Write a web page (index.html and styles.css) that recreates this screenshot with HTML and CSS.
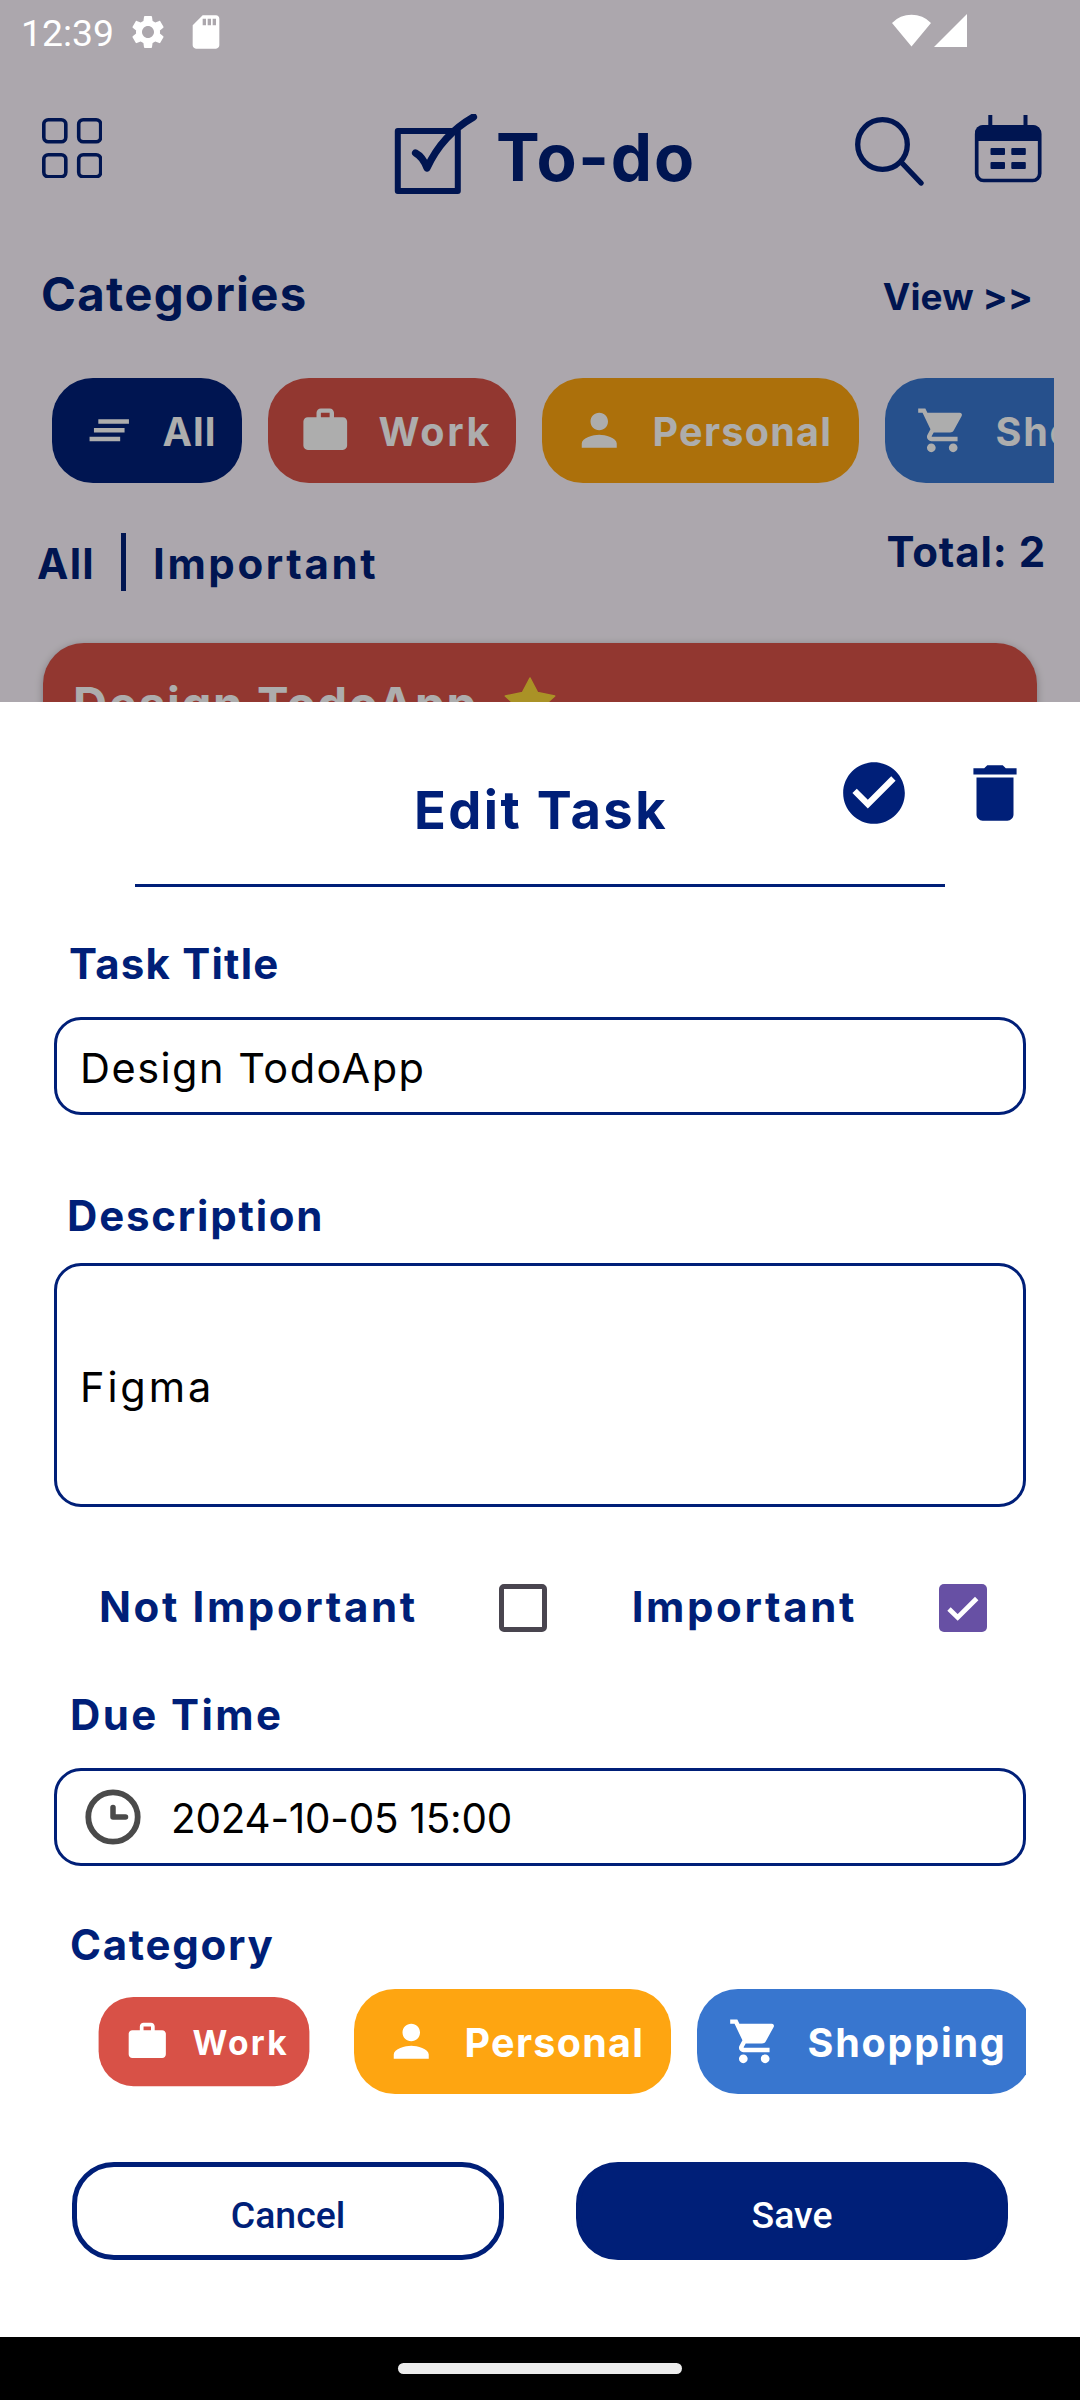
FILE: index.html
```html
<!DOCTYPE html>
<html lang="en">
<head>
<meta charset="utf-8">
<title>To-do</title>
<link rel="stylesheet" href="styles.css">
</head>
<body>
<svg class="sprite" aria-hidden="true">
  <symbol id="i-work" viewBox="0 0 24 24"><path d="M20 6h-4V4c0-1.110-.89-2-2-2h-4c-1.110 0-2 .89-2 2v2H4c-1.110 0-1.990.89-1.990 2L2 19c0 1.110.89 2 2 2h16c1.110 0 2-.89 2-2V8c0-1.110-.89-2-2-2zm-6 0h-4V4h4v2z"/></symbol>
  <symbol id="i-person" viewBox="0 0 24 24"><path d="M12 12c2.210 0 4-1.790 4-4s-1.790-4-4-4-4 1.790-4 4 1.790 4 4 4zm0 2c-2.670 0-8 1.340-8 4v2h16v-2c0-2.660-5.330-4-8-4z"/></symbol>
  <symbol id="i-cart" viewBox="0 0 24 24"><path d="M7 18c-1.100 0-1.990.9-1.990 2S5.900 22 7 22s2-.9 2-2-.9-2-2-2zM1 2v2h2l3.600 7.590-1.350 2.450c-.16.28-.25.61-.25.96 0 1.100.9 2 2 2h12v-2H7.420c-.14 0-.25-.11-.25-.25l.03-.12.9-1.630h7.450c.75 0 1.410-.41 1.750-1.030l3.580-6.490A1 1 0 0 0 20 4H5.210l-.94-2H1zm16 16c-1.100 0-1.990.9-1.990 2s.89 2 1.990 2 2-.9 2-2-.9-2-2-2z"/></symbol>
  <symbol id="i-all" viewBox="0 0 24 24"><path d="M5 13h14v-2H5v2zm-2 4h14v-2H3v2zM7 7v2h14V7H7z"/></symbol>
</svg>

<main class="screen">
  <section class="home">
    <header class="appbar">
      <svg class="menu" viewBox="0 0 60 60"><g fill="none" stroke="currentColor" stroke-width="3.600"><rect x="1.800" y="1.800" width="22" height="22" rx="4.500"/><rect x="36.700" y="1.800" width="22" height="22" rx="4.500"/><rect x="1.800" y="36.700" width="22" height="22" rx="4.500"/><rect x="36.700" y="36.700" width="22" height="22" rx="4.500"/></g></svg>
      <div class="brand">
        <svg class="logo" viewBox="0 0 84 80"><rect x="3.800" y="17" width="60" height="60" fill="none" stroke="currentColor" stroke-width="6" stroke-linejoin="round"/><path d="M21.500 39Q29 43 33 54Q48 21 79.500 3" fill="none" stroke="currentColor" stroke-width="7.200" stroke-linecap="round" stroke-linejoin="round"/></svg>
        <h1 class="brand-name">To-do</h1>
      </div>
      <div class="appbar-actions">
        <svg class="search" viewBox="0 0 72 74"><circle cx="30.500" cy="30.500" r="24.800" fill="none" stroke="currentColor" stroke-width="5.300"/><path d="M50 49L69 69" stroke="currentColor" stroke-width="5.400" stroke-linecap="round"/></svg>
        <svg class="calendar" viewBox="0 0 70 72"><rect x="3.700" y="14" width="63" height="53.500" rx="7" fill="none" stroke="currentColor" stroke-width="3.700"/><path d="M2 28V20a8 8 0 0 1 8-8H60a8 8 0 0 1 8 8V28z" fill="currentColor"/><path d="M17.300 2V14M52.500 2V14" stroke="currentColor" stroke-width="4"/><g fill="currentColor"><rect x="17.500" y="35" width="14.500" height="7" rx="1"/><rect x="38.300" y="35" width="14.500" height="7" rx="1"/><rect x="17.500" y="49" width="14.500" height="7" rx="1"/><rect x="38.300" y="49" width="14.500" height="7" rx="1"/></g></svg>
      </div>
    </header>

    <div class="section-head">
      <h2 class="section-title">Categories</h2>
      <a class="view-link">View &gt;&gt;</a>
    </div>

    <div class="chips home-chips">
      <div class="chip chip-all"><svg class="chip-icon"><use href="#i-all"/></svg><span class="chip-text t-all">All</span></div>
      <div class="chip chip-work"><svg class="chip-icon"><use href="#i-work"/></svg><span class="chip-text t-work">Work</span></div>
      <div class="chip chip-personal"><svg class="chip-icon"><use href="#i-person"/></svg><span class="chip-text t-personal">Personal</span></div>
      <div class="chip chip-shopping"><svg class="chip-icon"><use href="#i-cart"/></svg><span class="chip-text t-shopping">Shopping</span></div>
    </div>

    <div class="filters">
      <span class="filter filter-all">All</span>
      <span class="filter-divider"></span>
      <span class="filter filter-important">Important</span>
      <span class="filter-total">Total: 2</span>
    </div>

    <article class="task">
      <span class="task-name">Design TodoApp</span>
      <svg class="star" viewBox="0 0 52 52"><path d="M26 1L33.600 15.500L50.700 19L38.400 30L41.300 47L26 39L10.700 47L13.600 30L1.300 19L18.400 15.500Z" fill="#fbd738" stroke="#fbd738" stroke-width="1.500" stroke-linejoin="round"/></svg>
    </article>
    <div class="scrim"></div>
    <div class="status">
      <span class="clock">12:39</span>
      <svg class="status-icon gear" viewBox="0 0 24 24"><path d="M19.140 12.940c.04-.3.06-.61.06-.94 0-.32-.02-.64-.07-.94l2.030-1.580c.18-.14.23-.41.12-.61l-1.920-3.320c-.12-.22-.37-.29-.59-.22l-2.390.96c-.5-.38-1.030-.7-1.620-.94l-.36-2.540c-.04-.24-.24-.41-.48-.41h-3.840c-.24 0-.43.17-.47.41l-.36 2.540c-.59.24-1.130.57-1.620.94l-2.390-.96c-.22-.08-.47 0-.59.22L2.740 8.870c-.12.21-.08.47.12.61l2.030 1.580c-.05.3-.09.63-.09.94s.02.64.07.94l-2.030 1.580c-.18.14-.23.41-.12.61l1.920 3.320c.12.22.37.29.59.22l2.390-.96c.5.38 1.030.7 1.620.94l.36 2.540c.05.24.24.41.48.41h3.840c.24 0 .44-.17.47-.41l.36-2.540c.59-.24 1.130-.56 1.620-.94l2.390.96c.22.08.47 0 .59-.22l1.920-3.320c.12-.22.07-.47-.12-.61l-2.010-1.580zM12 15.600c-1.980 0-3.600-1.620-3.600-3.600s1.620-3.600 3.600-3.600 3.600 1.620 3.600 3.600-1.620 3.600-3.600 3.600z"/></svg>
      <svg class="status-icon sd" viewBox="0 0 24 24"><path d="M18 2h-8L4.020 8 4 20c0 1.100.9 2 2 2h12c1.100 0 2-.9 2-2V4c0-1.100-.9-2-2-2zm-6 6h-2V4h2v4zm3 0h-2V4h2v4zm3 0h-2V4h2v4z"/></svg>
      <svg class="signal" viewBox="0 0 75 33"><path d="M0 9A27 27 0 0 1 39 9L19.500 32.500zM42 33L75 0V33z"/></svg>
    </div>
  </section>

  <section class="sheet">
    <header class="sheet-head">
      <h2 class="sheet-title">Edit Task</h2>
      <div class="sheet-actions">
        <svg class="action" viewBox="0 0 24 24"><path d="M12 2C6.480 2 2 6.480 2 12s4.480 10 10 10 10-4.480 10-10S17.520 2 12 2zm-2 15l-5-5 1.410-1.410L10 14.170l7.590-7.590L19 8l-9 9z"/></svg>
        <svg class="action" viewBox="0 0 24 24"><path d="M6 19c0 1.100.9 2 2 2h8c1.100 0 2-.9 2-2V7H6v12zM19 4h-3.500l-1-1h-5l-1 1H5v2h14V4z"/></svg>
      </div>
    </header>
    <div class="rule"></div>

    <label class="label l-title">Task Title</label>
    <div class="field"><span class="value v-title">Design TodoApp</span></div>

    <label class="label l-desc">Description</label>
    <div class="field field-tall"><span class="value v-desc">Figma</span></div>

    <div class="checks">
      <span class="check-label c-not">Not Important</span>
      <span class="box"></span>
      <span class="check-label c-imp">Important</span>
      <span class="box box-on"><svg viewBox="0 0 48 48"><path d="M10 25L18.700 33.500L37.700 14.500" fill="none" stroke="#fff" stroke-width="4.800"/></svg></span>
    </div>

    <label class="label l-due">Due Time</label>
    <div class="field field-date">
      <svg class="time-icon" viewBox="0 0 56 56"><circle cx="28" cy="28" r="24.700" fill="none" stroke="#4a4a4a" stroke-width="5.800"/><path d="M28 18.500V28H40.500" fill="none" stroke="#4a4a4a" stroke-width="5.500" stroke-linecap="round" stroke-linejoin="round"/></svg>
      <span class="value v-date">2024-10-05 15:00</span>
    </div>

    <label class="label l-cat">Category</label>
    <div class="chips sheet-chips">
      <div class="chip chip-work chip-selected"><svg class="chip-icon"><use href="#i-work"/></svg><span class="chip-text t-work">Work</span></div>
      <div class="chip chip-personal"><svg class="chip-icon"><use href="#i-person"/></svg><span class="chip-text t-personal">Personal</span></div>
      <div class="chip chip-shopping"><svg class="chip-icon"><use href="#i-cart"/></svg><span class="chip-text t-shopping">Shopping</span></div>
    </div>

    <div class="buttons">
      <button class="btn btn-cancel">Cancel</button>
      <button class="btn btn-save">Save</button>
    </div>
  </section>

  <footer class="navbar"><span class="pill"></span></footer>
</main>
</body>
</html>
```
FILE: styles.css
```css
:root {
  --navy: #001f78;
  --red: #d85147;
  --orange: #fea511;
  --blue: #3876cf;
}

* { box-sizing: border-box; }

body {
  margin: 0;
  font-family: Inter, "Noto Sans", sans-serif;
  color: var(--navy);
}

h1, h2 { margin: 0; font-weight: 700; }
svg { display: block; flex: none; }
.sprite { position: absolute; width: 0; height: 0; }

.screen {
  width: 1080px;
  height: 2400px;
  display: flex;
  flex-direction: column;
  background: #fff;
  overflow: hidden;
  white-space: nowrap;
}

/* Home screen behind the sheet */
.home {
  position: relative;
  flex: none;
  height: 702px;
  padding-top: 63px;
  overflow: hidden;
  background: #fef7ff;
}

.scrim {
  position: absolute;
  inset: 0;
  background: rgba(0, 0, 0, .32);
}

.status {
  position: absolute;
  inset: 0 0 auto;
  height: 63px;
  padding: 0 113px 0 21px;
  display: flex;
  align-items: center;
  fill: #fff;
  color: #fff;
}
.clock {
  padding-top: 3px;
  font: 400 37.3px/40px Roboto, sans-serif;
}
.status-icon { width: 40px; height: 40px; }
.gear { margin-left: 14px; }
.sd { margin-left: 18px; }
.signal { width: 75px; height: 33px; margin: 0 0 2px auto; }

.appbar {
  height: 201px;
  padding: 0 37px 0 42px;
  display: flex;
  align-items: flex-start;
}
.menu { width: 60px; height: 60px; margin-top: 55px; }
.brand {
  display: flex;
  align-items: flex-start;
  gap: 18px;
  margin: 51px 0 0 292px;
}
.logo { width: 84px; height: 80px; }
.brand-name {
  padding-top: 4px;
  font-size: 65.5px;
  line-height: 80px;
  letter-spacing: 1.8px;
}
.appbar-actions {
  display: flex;
  gap: 49px;
  margin: 50px 0 0 auto;
}
.search { width: 72px; height: 74px; margin-top: 1px; }
.calendar { width: 70px; height: 72px; }

.section-head {
  display: flex;
  justify-content: space-between;
  height: 60px;
  padding: 0 47px 0 41px;
  line-height: 60px;
}
.section-title { font-size: 47.3px; letter-spacing: 1.3px; }
.view-link {
  padding-top: 3px;
  font-size: 37px;
  font-weight: 700;
  letter-spacing: .1px;
}

.chips { display: flex; gap: 26px; overflow: hidden; }
.home-chips { margin: 54px 26px 0 0; padding-left: 52px; }
.chip {
  flex: none;
  display: flex;
  align-items: center;
  gap: 27px;
  height: 105px;
  padding-left: 31px;
  border-radius: 41px;
  color: #fff;
  fill: #fff;
}
.chip-icon { width: 52.5px; height: 52.5px; }
.chip-text { padding-top: 3px; font-size: 39.5px; font-weight: 700; }
.chip-all { width: 190px; background: var(--navy); }
.chip-work { width: 248px; background: var(--red); }
.chip-personal { width: 317px; background: var(--orange); }
.chip-shopping { width: 335px; background: var(--blue); }
.chip-selected { transform: scale(.85); }
.t-all { letter-spacing: 1px; }
.t-work { letter-spacing: 2.7px; }
.t-personal { letter-spacing: 1.3px; }
.t-shopping { letter-spacing: 1.8px; }

.filters {
  display: flex;
  align-items: flex-start;
  height: 70px;
  margin-top: 39px;
  padding: 0 34px 0 37px;
  font-size: 42px;
  font-weight: 700;
  line-height: 60px;
}
.filter { margin-top: 12px; }
.filter-all { letter-spacing: 1.3px; }
.filter-divider {
  width: 5px;
  height: 58px;
  margin: 11px 27px 0 26px;
  background: var(--navy);
}
.filter-important { letter-spacing: 2.6px; }
.filter-total { margin-left: auto; letter-spacing: .9px; }

.task {
  display: flex;
  align-items: flex-start;
  height: 250px;
  margin: 51px 43px 0;
  padding: 31px 30px;
  border-radius: 41px;
  background: var(--red);
  box-shadow: 0 2px 8px rgba(0, 0, 0, .28);
  color: #fff;
}
.task-name {
  font-size: 47.3px;
  font-weight: 700;
  line-height: 60px;
  letter-spacing: 1.7px;
}
.star { width: 52px; height: 52px; margin: 3px 0 0 26px; }

/* Edit sheet */
.sheet {
  flex: none;
  display: flex;
  flex-direction: column;
  height: 1635px;
  padding: 0 54px;
  background: #fff;
}
.sheet-head {
  display: grid;
  grid-template-columns: 1fr auto 1fr;
  align-items: start;
  height: 182px;
  margin-right: -6px;
  margin-left: -6px;
}
.sheet-title {
  grid-column: 2;
  margin-top: 78px;
  padding-left: 2px;
  font-size: 52.5px;
  line-height: 60px;
  letter-spacing: 2.4px;
}
.sheet-actions {
  justify-self: end;
  display: flex;
  gap: 47px;
  margin-top: 54px;
  fill: var(--navy);
}
.action { width: 74px; height: 74px; }
.rule { height: 3px; margin: 0 81px; background: var(--navy); }

.label, .check-label {
  font-size: 42px;
  font-weight: 700;
  line-height: 60px;
}
.l-title { margin: 47px 0 23px 15px; letter-spacing: 1.2px; }
.l-desc { margin: 71px 0 17px 13px; letter-spacing: 1.8px; }
.l-due { margin: 48px 0 23px 16px; letter-spacing: 2.4px; }
.l-cat { margin: 49px 0 14px 16px; letter-spacing: 1.7px; }

.field {
  display: flex;
  align-items: center;
  height: 98px;
  padding: 0 23px;
  border: 3px solid var(--navy);
  border-radius: 27px;
  color: #000;
}
.field-tall { height: 244px; }
.value { padding-top: 3px; font-size: 41.5px; }
.v-title { letter-spacing: 1.5px; }
.v-desc { letter-spacing: 2.9px; }
.v-date { font-size: 40.4px; letter-spacing: -.2px; }
.field-date { gap: 30px; padding-left: 28px; }
.time-icon { width: 56px; height: 56px; }

.checks {
  display: flex;
  align-items: center;
  height: 60px;
  margin: 70px 0 0 45px;
}
.c-not { letter-spacing: 2.6px; }
.c-imp { margin-left: 85px; letter-spacing: 2.6px; }
.box {
  width: 48px;
  height: 48px;
  margin: 2px 0 0 81px;
  border: 5px solid #49454f;
  border-radius: 5px;
}
.box-on { margin-left: 82px; border: 0; background: #6750a4; }

.sheet-chips { padding-left: 26px; }

.buttons {
  display: flex;
  gap: 72px;
  margin: 68px 18px 0;
}
.btn {
  flex: 1;
  height: 98px;
  padding: 8px 0 0;
  border: 5px solid var(--navy);
  border-radius: 42px;
  font: 500 37.4px Roboto, sans-serif;
}
.btn-cancel { background: #fff; color: var(--navy); }
.btn-save { background: var(--navy); color: #fff; }

.navbar {
  flex: 1;
  display: flex;
  align-items: center;
  justify-content: center;
  background: #000;
}
.pill { width: 284px; height: 11px; border-radius: 6px; background: #ececec; }
```
